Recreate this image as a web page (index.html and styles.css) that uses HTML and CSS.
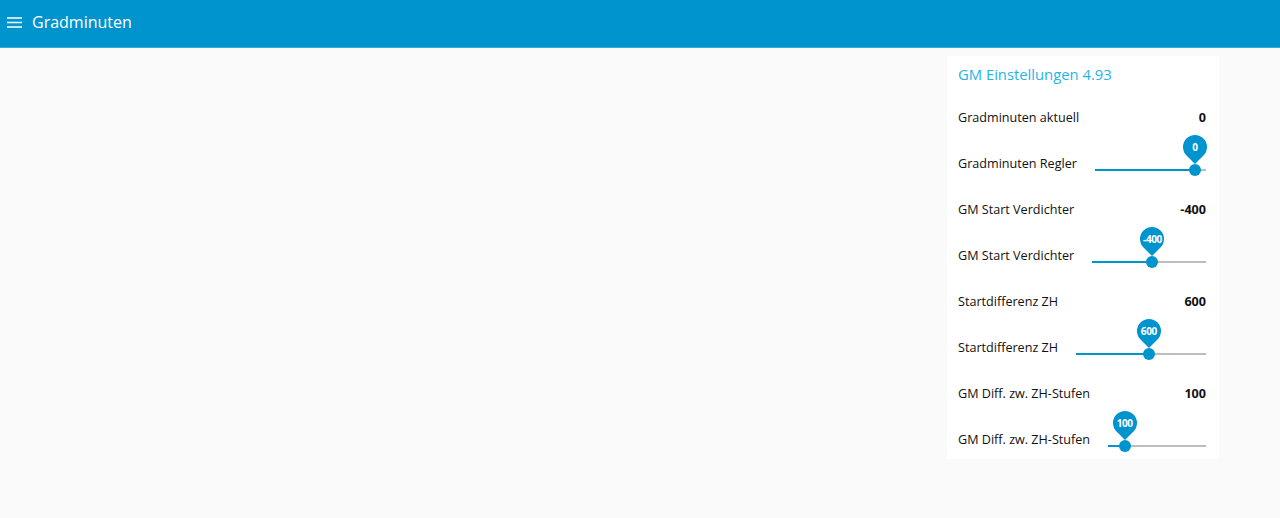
FILE: index.html
```html
<!DOCTYPE html>
<html lang="de">
<head>
  <meta charset="UTF-8" />
  <meta name="viewport" content="width=device-width, initial-scale=1" />
  <title>Gradminuten</title>
  <link rel="stylesheet" href="styles.css">
</head>
<body>
  <header class="toolbar">
    <span class="menu-icon">
      <svg width="15" height="11" viewBox="0 0 15 11"><path d="M0 1h15M0 5.5h15M0 10h15" stroke="#fff" stroke-width="1.6"/></svg>
    </span>
    <span class="toolbar-title">Gradminuten</span>
  </header>

  <main class="content">
    <div class="card">
      <div class="card-title">GM Einstellungen 4.93</div>

      <div class="row">
        <span class="label">Gradminuten aktuell</span>
        <span class="value">0</span>
      </div>
      <div class="row">
        <span class="label">Gradminuten Regler</span>
        <div class="slider">
          <div class="track"><div class="fill" style="width: 90%"></div></div>
          <div class="thumb" style="left: 90%"><span class="pin"><span class="pin-text">0</span></span></div>
        </div>
      </div>

      <div class="row">
        <span class="label">GM Start Verdichter</span>
        <span class="value">-400</span>
      </div>
      <div class="row">
        <span class="label">GM Start Verdichter</span>
        <div class="slider">
          <div class="track"><div class="fill" style="width: 53%"></div></div>
          <div class="thumb" style="left: 53%"><span class="pin"><span class="pin-text">-400</span></span></div>
        </div>
      </div>

      <div class="row">
        <span class="label">Startdifferenz ZH</span>
        <span class="value">600</span>
      </div>
      <div class="row">
        <span class="label">Startdifferenz ZH</span>
        <div class="slider">
          <div class="track"><div class="fill" style="width: 56%"></div></div>
          <div class="thumb" style="left: 56%"><span class="pin"><span class="pin-text">600</span></span></div>
        </div>
      </div>

      <div class="row">
        <span class="label">GM Diff. zw. ZH-Stufen</span>
        <span class="value">100</span>
      </div>
      <div class="row">
        <span class="label">GM Diff. zw. ZH-Stufen</span>
        <div class="slider">
          <div class="track"><div class="fill" style="width: 17%"></div></div>
          <div class="thumb" style="left: 17%"><span class="pin"><span class="pin-text">100</span></span></div>
        </div>
      </div>
    </div>
  </main>
</body>
</html>
```

FILE: styles.css
```css
body {
  margin: 0;
  font-family: "Open Sans", Arial, sans-serif;
  background-color: #fafafa;
  color: #111;
}

.toolbar {
  height: 44px;
  background-color: #0094ce;
  display: flex;
  align-items: center;
  padding: 0 0 3px 7px;
  border-bottom: 1px solid #38a8d8;
  color: #fff;
}

.menu-icon {
  display: flex;
  margin-right: 10px;
  margin-top: 1px;
}

.toolbar-title {
  font-size: 16px;
}

.content {
  display: flex;
  justify-content: flex-end;
  padding: 8px 61px 0 0;
}

.card {
  width: 248px;
  background: #fff;
  padding: 0 13px 0 11px;
}

.card-title {
  height: 35px;
  display: flex;
  align-items: center;
  color: #26b4e8;
  font-size: 14.8px;
  padding-bottom: 3px;
}

.row {
  height: 46px;
  display: flex;
  align-items: center;
  font-size: 12.6px;
}

.row:last-child {
  margin-bottom: -3px;
}

.label {
  white-space: nowrap;
}

.value {
  margin-left: auto;
  font-weight: bold;
}

.slider {
  flex: 1;
  position: relative;
  margin-left: 18px;
  height: 2px;
  margin-top: 14px;
}

.track {
  height: 2px;
  background: #bdbdbd;
}

.fill {
  height: 2px;
  background: #0094ce;
}

.thumb {
  position: absolute;
  top: -5px;
  width: 12px;
  height: 12px;
  margin-left: -6px;
  border-radius: 50%;
  background: #0094ce;
}

.pin {
  position: absolute;
  left: -6px;
  top: -29px;
  width: 24px;
  height: 24px;
  display: flex;
  align-items: center;
  justify-content: center;
}

.pin::before {
  content: "";
  position: absolute;
  inset: 0;
  border-radius: 50% 50% 0 50%;
  transform: rotate(45deg);
  background: #0094ce;
}

.pin-text {
  position: relative;
  color: #fff;
  font-size: 10px;
  font-weight: bold;
  letter-spacing: -0.4px;
}
```
